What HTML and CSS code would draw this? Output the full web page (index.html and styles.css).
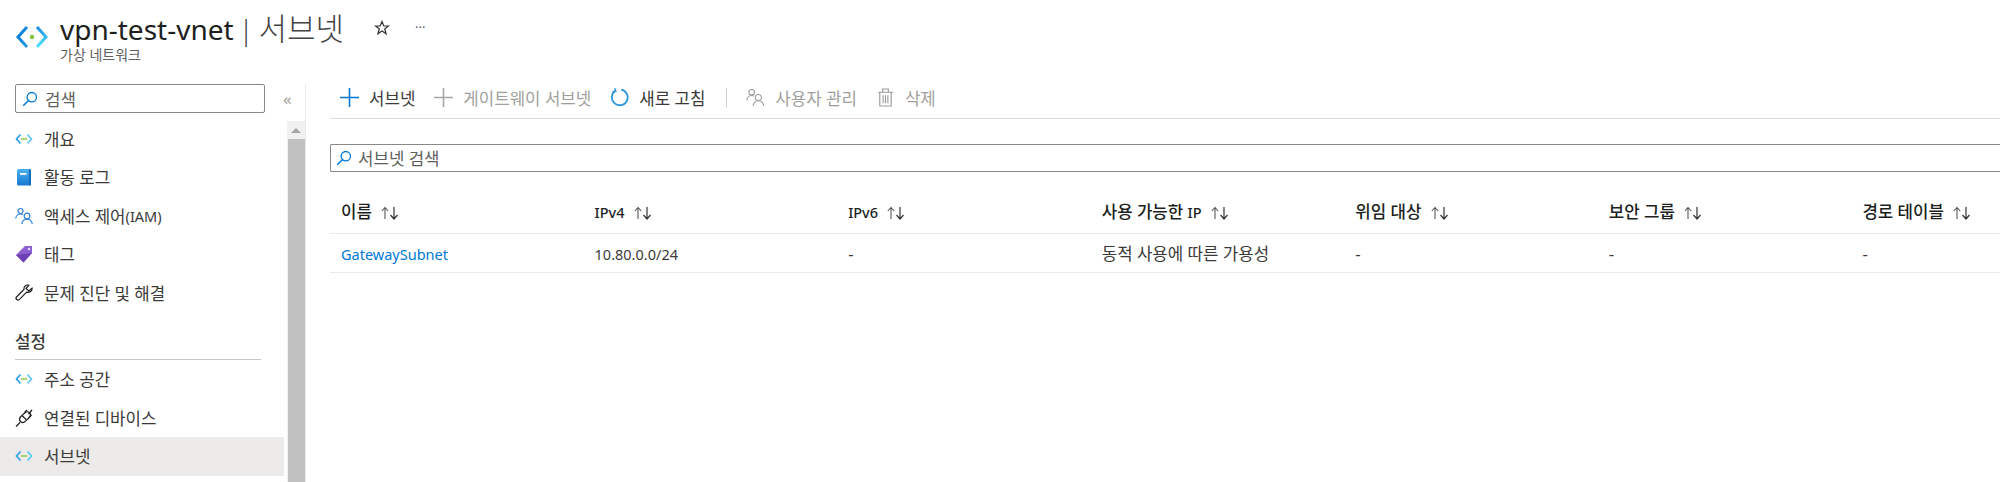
FILE: index.html
```html
<!DOCTYPE html>
<html lang="ko">
<head>
  <meta charset="UTF-8" />
  <title>vpn-test-vnet | 서브넷</title>
  <link rel="stylesheet" href="styles.css">
</head>
<body>
  <svg class="defs" width="0" height="0">
    <defs>
      <linearGradient id="vnetLeft" x1="0" y1="0" x2="1" y2="1">
        <stop offset="0" stop-color="#0078d4"/>
        <stop offset="1" stop-color="#2a9be8"/>
      </linearGradient>
      <linearGradient id="vnetRight" x1="0" y1="0" x2="0" y2="1">
        <stop offset="0" stop-color="#1c8fdc"/>
        <stop offset="1" stop-color="#50e6ff"/>
      </linearGradient>
      <linearGradient id="bookFill" x1="0" y1="0" x2="0" y2="1">
        <stop offset="0" stop-color="#4bb0ee"/>
        <stop offset="1" stop-color="#1778d0"/>
      </linearGradient>
      <symbol id="vnetDots" viewBox="0 0 18 12">
        <path d="M5.500 1.500 1.500 6l4 4.500" fill="none" stroke="#2aa0ea" stroke-width="1.700"/>
        <path d="M12.500 1.500l4 4.500-4 4.500" fill="none" stroke="#5cc8f5" stroke-width="1.700"/>
        <circle cx="6.800" cy="6" r="1" fill="#8cc63f"/>
        <circle cx="9" cy="6" r="1" fill="#8cc63f"/>
        <circle cx="11.200" cy="6" r="1" fill="#8cc63f"/>
      </symbol>
      <symbol id="searchGlass" viewBox="0 0 16 16">
        <circle cx="9.800" cy="6.200" r="4.700" fill="none" stroke="#0078d4" stroke-width="1.300"/>
        <path d="M6.300 9.700 1.200 14.800" fill="none" stroke="#0078d4" stroke-width="1.500"/>
      </symbol>
      <symbol id="sortArrows" viewBox="0 0 20 14">
        <path d="M5 13V2M1.800 5 5 1.500 8.200 5" fill="none" stroke="#555" stroke-width="1.100"/>
        <path d="M14 1v11.500M10.500 9 14 13l3.500-4" fill="none" stroke="#333" stroke-width="1.200"/>
      </symbol>
    </defs>
  </svg>

  <header class="page-head">
    <svg class="head-icon" viewBox="0 0 32 24">
      <path d="M11 2 2 12l9 10" fill="none" stroke="url(#vnetLeft)" stroke-width="3"/>
      <path d="m21 2 9 10-9 10" fill="none" stroke="url(#vnetRight)" stroke-width="3"/>
      <circle cx="16" cy="12" r="2.200" fill="#86c240"/>
    </svg>
    <div class="head-text">
      <h1>vpn-test-vnet <span class="head-sep">|</span> <span class="head-light">서브넷</span></h1>
      <p>가상 네트워크</p>
    </div>
    <svg class="head-star" viewBox="0 0 16 16">
      <path d="M8 1.500 9.800 6h4.700l-3.800 3 1.400 4.800L8 11l-4.100 2.800L5.300 9 1.500 6h4.700z" fill="none" stroke="#333" stroke-width="1.200"/>
    </svg>
    <span class="head-more">···</span>
  </header>

  <div class="layout">
    <aside class="sidebar">
      <div class="side-top">
        <div class="side-search">
          <svg class="glass"><use href="#searchGlass"/></svg>
          <span>검색</span>
        </div>
        <span class="collapse">«</span>
      </div>
      <div class="side-body">
        <nav class="side-nav">
          <a class="nav-item"><svg class="nav-icon small"><use href="#vnetDots"/></svg>개요</a>
          <a class="nav-item">
            <svg class="nav-icon" viewBox="0 0 18 18">
              <rect x="2" y="1" width="14" height="16.500" rx="1.500" fill="url(#bookFill)"/>
              <path d="M14 1h.500a1.500 1.500 0 0 1 1.500 1.500v13.500a1.500 1.500 0 0 1-1.500 1.500H14z" fill="#0f6cbd"/>
              <path d="M5 5h6.500v1.800H5z" fill="#fff"/>
            </svg>활동 로그</a>
          <a class="nav-item">
            <svg class="nav-icon" viewBox="0 0 18 18">
              <g fill="none" stroke="#2f7fe0" stroke-width="1.200">
                <circle cx="5.500" cy="4" r="2.500"/>
                <path d="M.8 11.500c0-2.500 2-4.500 4.700-4.500 1 0 1.800.2 2.500.7"/>
                <circle cx="12" cy="9" r="2.800"/>
                <path d="M6.800 17c0-2.500 2.200-4.800 5.200-4.800s5.200 2.300 5.200 4.800"/>
              </g>
            </svg>액세스 제어<span class="en">(IAM)</span></a>
          <a class="nav-item">
            <svg class="nav-icon" viewBox="0 0 18 18">
              <path d="M10 1h7v7l-8.500 9.500L1 10z" fill="#8c5fd0"/>
              <path d="M17 8 8.500 17.500 1 10l8-1z" fill="#6f3fb5"/>
              <circle cx="14" cy="4" r="1.200" fill="#e8dcf8"/>
            </svg>태그</a>
          <a class="nav-item">
            <svg class="nav-icon" viewBox="0 0 18 18">
              <path d="M17 4.200 13.800 7 11 4.500 13.800 1.200C11 .4 8.500 2.500 9 5.500L1.500 13c-1.500 1.800 1.200 4 2.800 2.600l7.300-7.400c3.200.8 6-1.300 5.400-4z" fill="none" stroke="#222" stroke-width="1.200"/>
            </svg>문제 진단 및 해결</a>
          <div class="nav-group">설정</div>
          <a class="nav-item"><svg class="nav-icon small"><use href="#vnetDots"/></svg>주소 공간</a>
          <a class="nav-item">
            <svg class="nav-icon" viewBox="0 0 18 18">
              <g fill="none" stroke="#222" stroke-width="1.300">
                <path d="M1 17.500 5 13.500M13.500 5 17 1"/>
                <path d="M7 6.500 11.500 11 9.500 13a3.300 3.300 0 0 1-4.500-4.500z"/>
                <path d="M7.500 6 10 3.800a3 3 0 0 1 4.500 4.500L12 10.800"/>
                <path d="M9.500 3.500 12 1M14 8.500 16.500 6"/>
              </g>
            </svg>연결된 디바이스</a>
          <a class="nav-item active"><svg class="nav-icon small"><use href="#vnetDots"/></svg>서브넷</a>
        </nav>
        <div class="scrollbar">
          <span class="scroll-up"></span>
          <span class="scroll-thumb"></span>
        </div>
      </div>
    </aside>

    <main class="content">
      <div class="toolbar">
        <button class="tool">
          <svg class="tool-icon" viewBox="0 0 18 18"><path d="M9 0v18M0 9h18" stroke="#0078d4" stroke-width="1.500"/></svg>서브넷
        </button>
        <button class="tool off">
          <svg class="tool-icon" viewBox="0 0 18 18"><path d="M9 0v18M0 9h18" stroke="#a6a6a6" stroke-width="1.500"/></svg>게이트웨이 서브넷
        </button>
        <button class="tool">
          <svg class="tool-icon" viewBox="0 0 20 20">
            <path d="M11.800 1.700A8.300 8.300 0 1 1 5.600 3" fill="none" stroke="#2b95dd" stroke-width="1.900"/>
            <path d="M5 .3 6.200 3.400 2.700 4.200" fill="none" stroke="#2b95dd" stroke-width="1.500"/>
          </svg>새로 고침
        </button>
        <span class="tool-sep"></span>
        <button class="tool off">
          <svg class="tool-icon" viewBox="0 0 20 20">
            <g fill="none" stroke="#9a9a9a" stroke-width="1.100">
              <circle cx="6" cy="4.500" r="3"/>
              <path d="M1 13c0-3 2-5.200 5-5.200 1 0 1.800.2 2.500.6"/>
              <circle cx="13" cy="10" r="3.200"/>
              <path d="M7.500 19c0-3 2.300-5.500 5.500-5.500s5.500 2.500 5.500 5.500"/>
            </g>
          </svg>사용자 관리
        </button>
        <button class="tool off">
          <svg class="tool-icon" viewBox="0 0 18 20">
            <g fill="none" stroke="#9a9a9a" stroke-width="1.200">
              <path d="M3 4.500V19h12V4.500M1 4.500h16M6 4.500V1h6v3.500"/>
              <path d="M6.500 7.500v8.500M9 7.500v8.500M11.500 7.500v8.500"/>
            </g>
          </svg>삭제
        </button>
      </div>

      <div class="filter">
        <svg class="glass"><use href="#searchGlass"/></svg>
        <span>서브넷 검색</span>
      </div>

      <table class="grid">
        <thead>
          <tr>
            <th>이름 <svg class="sort"><use href="#sortArrows"/></svg></th>
            <th><span class="en">IPv4</span> <svg class="sort"><use href="#sortArrows"/></svg></th>
            <th><span class="en">IPv6</span> <svg class="sort"><use href="#sortArrows"/></svg></th>
            <th>사용 가능한 <span class="en">IP</span> <svg class="sort"><use href="#sortArrows"/></svg></th>
            <th>위임 대상 <svg class="sort"><use href="#sortArrows"/></svg></th>
            <th>보안 그룹 <svg class="sort"><use href="#sortArrows"/></svg></th>
            <th>경로 테이블 <svg class="sort"><use href="#sortArrows"/></svg></th>
          </tr>
        </thead>
        <tbody>
          <tr>
            <td><a class="link en">GatewaySubnet</a></td>
            <td><span class="en">10.80.0.0/24</span></td>
            <td>-</td>
            <td>동적 사용에 따른 가용성</td>
            <td>-</td>
            <td>-</td>
            <td>-</td>
          </tr>
        </tbody>
      </table>
    </main>
  </div>
</body>
</html>
```

FILE: styles.css
```css
html, body {
  height: 100%;
}

body {
  margin: 0;
  overflow: hidden;
  background-color: #fff;
  color: #3b3a39;
  font-family: "Noto Sans", "Noto Sans CJK KR", sans-serif;
  font-size: 16.8px;
}

/* latin runs sit smaller than the hangul around them */
.en {
  font-size: 14.5px;
}

.defs {
  display: block;
  height: 0;
}

.page-head {
  display: flex;
  align-items: flex-start;
  height: 84px;
  box-sizing: border-box;
  padding: 10px 0 0 16px;
}

.head-icon {
  width: 32px;
  height: 24px;
  margin: 15px 12px 0 0;
}

.head-text h1 {
  margin: 0;
  font-size: 28px;
  line-height: 36px;
  font-weight: 400;
  color: #201f1e;
  white-space: nowrap;
  word-spacing: -2.5px;
}

.head-sep {
  color: #444;
  font-weight: 300;
}

.head-light {
  color: #444;
  font-size: 31px;
  font-weight: 300;
}

.head-text p {
  margin: 0;
  font-size: 14px;
  line-height: 16px;
  color: #605e5c;
}

.head-star {
  width: 16px;
  height: 16px;
  margin: 10px 0 0 30px;
}

.head-more {
  margin: 8px 0 0 25px;
  font-size: 13px;
  color: #555;
}

.layout {
  display: flex;
  height: 398px;
}

.sidebar {
  width: 306px;
  flex: none;
  display: flex;
  flex-direction: column;
  box-sizing: border-box;
  border-right: 1px solid #e8e8e8;
}

.side-top {
  display: flex;
  align-items: center;
  padding-left: 15px;
  height: 29px;
}

.side-search {
  width: 250px;
  height: 29px;
  box-sizing: border-box;
  display: flex;
  align-items: center;
  gap: 7px;
  padding-left: 6px;
  border: 1px solid #8a8886;
  border-radius: 2px;
  color: #605e5c;
}

.glass {
  width: 16px;
  height: 16px;
  flex: none;
}

.collapse {
  margin-left: 18px;
  font-size: 17px;
  color: #a19f9d;
}

.side-body {
  flex: 1;
  display: flex;
  min-height: 0;
  margin-top: 8px;
}

.side-nav {
  width: 284px;
  flex: none;
  margin-top: -1.5px;
}

.nav-item {
  display: flex;
  align-items: center;
  height: 38.5px;
  padding-left: 15px;
}

.nav-item.active {
  background-color: #edebe9;
}

.nav-icon {
  width: 18px;
  height: 18px;
  flex: none;
  margin-right: 11px;
}

.nav-icon.small {
  height: 12px;
}

.nav-group {
  margin: 16px 23px 0 15px;
  height: 32px;
  line-height: 27px;
  box-sizing: border-box;
  font-weight: 500;
  border-bottom: 1px solid #c8c6c4;
}

.scrollbar {
  margin-left: 3px;
  width: 18px;
  flex: none;
  display: flex;
  flex-direction: column;
  align-items: center;
  background-color: #f1f1f1;
}

.scroll-up {
  flex: none;
  margin: 7px 0 6px;
  border-left: 5px solid transparent;
  border-right: 5px solid transparent;
  border-bottom: 5px solid #a3a3a3;
}

.scroll-thumb {
  flex: 1;
  width: 17px;
  background-color: #c1c1c1;
}

.content {
  flex: 1;
  min-width: 0;
  overflow: hidden;
  padding-left: 24px;
}

.toolbar {
  display: flex;
  align-items: center;
  height: 31px;
  padding: 0 0 5px 10px;
  border-bottom: 1px solid #dcdcdc;
  margin-top: -2px;
}

.tool {
  display: flex;
  align-items: center;
  gap: 10px;
  padding: 0;
  margin-right: 19px;
  border: none;
  background: none;
  color: #3b3a39;
  font: inherit;
}

.tool.off {
  color: #a19f9d;
}

.tool-icon {
  width: 19px;
  height: 19px;
  flex: none;
}

.tool-sep {
  width: 1px;
  height: 20px;
  margin: 0 19px 0 2px;
  background-color: #d2d0ce;
}

.filter {
  display: flex;
  align-items: center;
  gap: 6px;
  height: 28px;
  box-sizing: border-box;
  margin-top: 25px;
  padding-left: 5px;
  border: 1px solid #8a8886;
  border-right: none;
  border-radius: 2px 0 0 2px;
  color: #605e5c;
}

.grid {
  width: 1775px;
  margin-top: 20px;
  border-collapse: collapse;
  table-layout: fixed;
}

.grid th,
.grid td {
  padding: 0 0 0 11px;
  text-align: left;
  white-space: nowrap;
  border-bottom: 1px solid #eaeaea;
}

.grid th {
  height: 38px;
  padding-bottom: 3px;
  font-weight: 500;
  color: #201f1e;
}

.grid td {
  height: 38px;
}

.sort {
  width: 20px;
  height: 14px;
  margin-left: 4px;
  vertical-align: -2px;
}

.link {
  color: #0078d4;
}
```
